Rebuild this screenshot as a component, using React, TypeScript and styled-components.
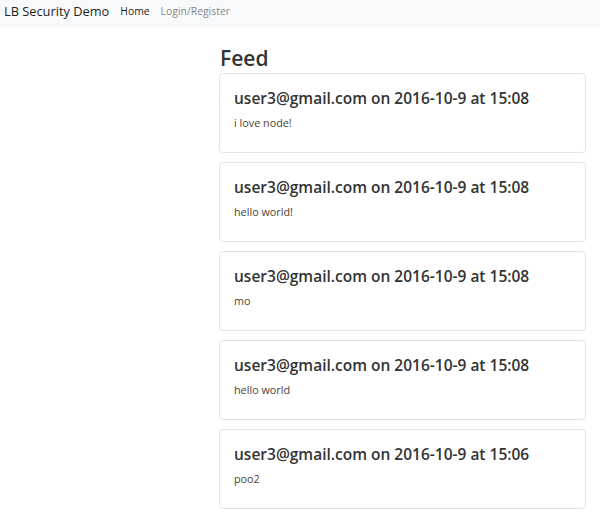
import React from "react";
import styled, { createGlobalStyle } from "styled-components";

const Global = createGlobalStyle`
  html, body { margin: 0; padding: 0; background: #fff; }
  body { font-family: "Open Sans", "Noto Sans", sans-serif; color: #212529; }
  * { box-sizing: border-box; }
`;

const Navbar = styled.nav`
  height: 27px;
  background: #f8f9fa;
  display: flex;
  align-items: center;
  gap: 11px;
  padding: 0 4px 6px;
`;

const Brand = styled.span`
  font-size: 12.8px;
  color: rgba(0, 0, 0, 0.9);
`;

const NavLink = styled.a<{ $active?: boolean }>`
  font-size: 10.4px;
  color: ${(p) => (p.$active ? "rgba(0,0,0,0.9)" : "rgba(0,0,0,0.5)")};
  text-decoration: none;
`;

const Layout = styled.div`
  display: grid;
  grid-template-columns: 219px 367px;
`;

const Main = styled.main`
  grid-column: 2;
  display: flex;
  flex-direction: column;
  gap: 9px;
  padding-top: 19px;
  padding-bottom: 10px;
`;

const Title = styled.h1`
  font-size: 21px;
  font-weight: 600;
  margin: 0 0 -6px 1px;
  line-height: 24px;
  color: #333;
`;

const Card = styled.div`
  border: 1px solid #e3e3e3;
  border-radius: 4px;
  height: 80px;
  padding: 14px 14px;
`;

const CardTitle = styled.h2`
  font-size: 15.5px;
  font-weight: 600;
  color: #333;
  margin: 0 0 7px;
  line-height: 20px;
`;

const CardText = styled.p`
  font-size: 10.8px;
  line-height: 16px;
  color: #4a3f35;
  margin: 0;
`;

const posts = [
  { time: "15:08", text: "i love node!" },
  { time: "15:08", text: "hello world!" },
  { time: "15:08", text: "mo" },
  { time: "15:08", text: "hello world" },
  { time: "15:06", text: "poo2" },
];

export default function App() {
  return (
    <>
      <Global />
      <Navbar>
        <Brand>LB Security Demo</Brand>
        <NavLink $active href="#">Home</NavLink>
        <NavLink href="#">Login/Register</NavLink>
      </Navbar>
      <Layout>
        <Main>
          <Title>Feed</Title>
          {posts.map((p, i) => (
            <Card key={i}>
              <CardTitle>user3@gmail.com on 2016-10-9 at {p.time}</CardTitle>
              <CardText>{p.text}</CardText>
            </Card>
          ))}
        </Main>
      </Layout>
    </>
  );
}
